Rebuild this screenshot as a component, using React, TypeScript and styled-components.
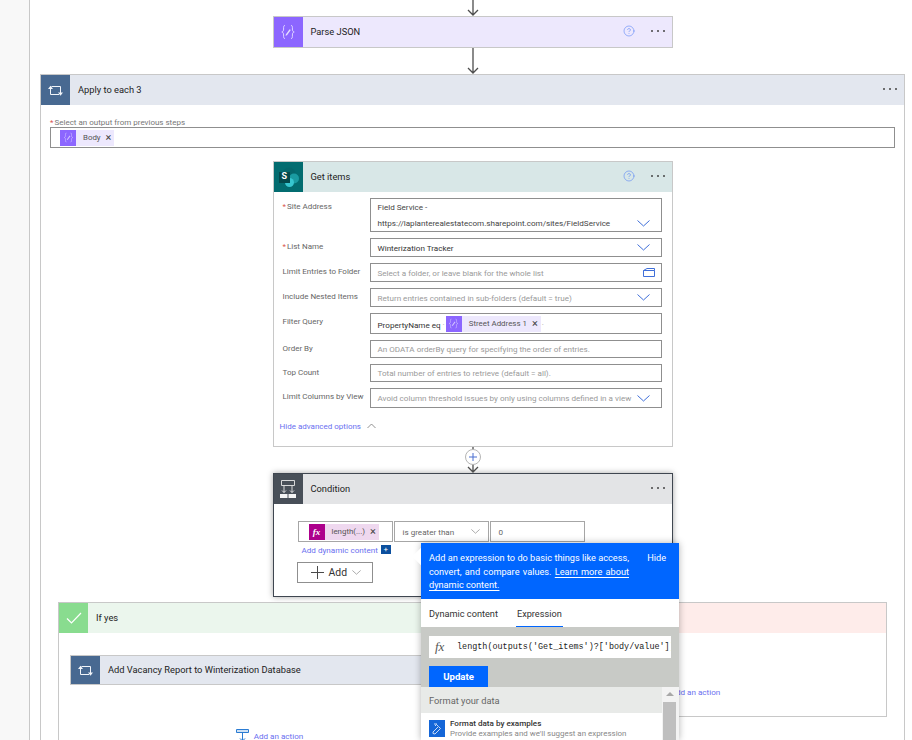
import React from 'react';
import styled, { createGlobalStyle } from 'styled-components';
import { CircleHelp } from 'lucide-react';

const GlobalStyle = createGlobalStyle`
  html, body {
    margin: 0;
    padding: 0;
    background: #fff;
  }
  * {
    box-sizing: border-box;
  }
`;

const Root = styled.div`
  position: relative;
  width: 912px;
  height: 740px;
  overflow: hidden;
  font-family: Roboto, 'Open Sans', sans-serif;
  font-size: 9.3px;
  color: #333;
`;

const Page = styled.div`
  display: flex;
  height: 740px;
`;

const Gutter = styled.div`
  flex: 0 0 30px;
  background: #f8f8f8;
  border-right: 1px solid #c8c8c8;
`;

const Canvas = styled.div`
  flex: 0 0 875px;
  padding-left: 10px;
`;

const ConnectorBox = styled.div<{ $h: number }>`
  position: relative;
  display: flex;
  justify-content: center;
  height: ${p => p.$h}px;
`;

const PlusCircle = styled.div`
  position: absolute;
  top: 2px;
  left: 50%;
  margin-left: -8px;
  width: 16px;
  height: 16px;
  display: flex;
  align-items: center;
  justify-content: center;
  background: #fff;
  border: 1px solid #b5b5b5;
  border-radius: 50%;
`;

const Card = styled.div<{ $dark?: boolean }>`
  width: 400px;
  margin: 0 auto;
  background: #fff;
  border: 1px solid ${p => (p.$dark ? '#3f4650' : '#c8c8c8')};
  box-shadow: ${p => (p.$dark ? '0 0 6px rgba(0,0,0,.35)' : 'none')};
`;

const Header = styled.div<{ $bg: string; $h?: number }>`
  display: flex;
  align-items: center;
  height: ${p => p.$h ?? 30}px;
  background: ${p => p.$bg};
`;

const IconCell = styled.div<{ $bg: string }>`
  position: relative;
  flex: 0 0 29px;
  align-self: stretch;
  display: flex;
  align-items: center;
  justify-content: center;
  background: ${p => p.$bg};
`;

const Title = styled.div`
  flex: 1;
  margin-top: -2px;
  padding-left: 8px;
  color: #222;
  white-space: nowrap;
`;

const Help = styled.div`
  display: flex;
  margin: -2px 16px 0 0;
  color: #4f7df5;
`;

const Dots = styled.div`
  display: flex;
  gap: 4px;
  margin: -2px 7px 0 0;

  span {
    width: 2px;
    height: 2px;
    border-radius: 50%;
    background: #444;
  }
`;

const MoreDots = () => (
  <Dots>
    <span />
    <span />
    <span />
  </Dots>
);

const ApplyCard = styled.div`
  width: 865px;
  background: #fff;
  border: 1px solid #c8c8c8;
  border-bottom: none;
`;

const ApplyBody = styled.div`
  padding: 11px 9px 0;
`;

const SmallLabel = styled.div`
  height: 11px;
  padding-top: 1px;
  line-height: 11px;
  font-size: 8px;
  color: #777;

  b {
    font-weight: 400;
    color: #d9534f;
    margin-right: 1px;
  }
`;

const OutputInput = styled.div`
  display: flex;
  align-items: center;
  height: 21px;
  padding-left: 9px;
  border: 1px solid #8f8f8f;
`;

const Token = styled.div<{ $bg: string; $indent?: number }>`
  display: flex;
  align-items: center;
  height: 16px;
  margin-left: ${p => p.$indent ?? 0}px;
  background: ${p => p.$bg};
  color: #555;
  font-size: 7.9px;
  white-space: nowrap;
`;

const TokenIcon = styled.div<{ $bg: string }>`
  flex: 0 0 16px;
  align-self: stretch;
  display: flex;
  align-items: center;
  justify-content: center;
  margin-right: 7px;
  background: ${p => p.$bg};
  color: #fff;
`;

const TokenClose = styled.span`
  margin: 0 3px 0 5px;
  font-size: 11px;
  line-height: 1;
  color: #444;
`;

const FxBadge = styled.span`
  font-family: 'Liberation Serif', serif;
  font-style: italic;
  font-weight: 700;
  font-size: 9px;
`;

const GetItemsWrap = styled.div`
  margin-top: 13px;
`;

const Form = styled.div`
  display: flex;
  flex-direction: column;
  gap: 6px;
  padding: 6px 10px 0 9px;
`;

const Row = styled.div`
  display: grid;
  grid-template-columns: 87px 1fr;
`;

const RowLabel = styled.div`
  padding-top: 3px;
  line-height: 11px;
  font-size: 8px;
  color: #666;
  white-space: nowrap;

  b {
    font-weight: 400;
    color: #d9534f;
    margin-right: 1px;
  }
`;

const Field = styled.div<{ $h: number }>`
  display: flex;
  align-items: center;
  height: ${p => p.$h}px;
  padding: 0 11px 0 7px;
  border: 1px solid #8f8f8f;
  font-size: 8.1px;
  color: #444;
  white-space: nowrap;
`;

const Placeholder = styled.span`
  flex: 1;
  color: #9a9a9a;
`;

const Value = styled.span`
  flex: 1;
  color: #333;
`;

const SiteValue = styled.div`
  flex: 1;
  display: flex;
  flex-direction: column;
  gap: 5px;
  line-height: 11px;
  color: #444;
`;

const SiteLine = styled.div`
  display: flex;
  align-items: center;
  justify-content: space-between;
`;

const FilterLead = styled.span`
  margin: 3px 1px 0 0;
  color: #333;
`;

const FilterDot = styled.span`
  margin: 0 1px;
  color: #aaa;
`;

const FolderSlot = styled.span`
  display: flex;
  margin-right: -5px;
`;

const HideLink = styled.div`
  display: flex;
  align-items: center;
  gap: 6px;
  height: 38px;
  padding: 0 0 2px 6px;
  font-size: 8px;
  color: #6a6ff0;
`;

const ConditionBody = styled.div`
  padding: 17px 0 13px 24px;
`;

const ConditionRow = styled.div`
  display: flex;
  gap: 1px;
`;

const ConditionCell = styled.div<{ $w: number }>`
  display: flex;
  align-items: center;
  justify-content: space-between;
  width: ${p => p.$w}px;
  height: 21px;
  padding: 0 8px;
  border: 1px solid #a6a6a6;
  font-size: 8.1px;
  color: #666;
`;

const DynamicRow = styled.div`
  display: flex;
  align-items: center;
  gap: 3px;
  height: 11px;
  margin-top: 2px;
  padding-left: 4px;
  font-size: 8.1px;
  color: #6a6ff0;
`;

const PlusBox = styled.span`
  display: flex;
  align-items: center;
  justify-content: center;
  width: 10px;
  height: 9px;
  background: #0b4f9e;
  color: #fff;
  font-size: 8px;
  line-height: 1;
`;

const AddButton = styled.div`
  display: flex;
  align-items: center;
  width: 76px;
  height: 21px;
  margin: 7px 0 0 -1px;
  padding-left: 13px;
  gap: 5px;
  border: 1px solid #8f8f8f;
  font-size: 10.4px;
  color: #333;
`;

const Branches = styled.div`
  display: flex;
  gap: 5px;
  margin-top: 5px;
  padding: 0 17px;
`;

const Branch = styled.div<{ $w: number; $open?: boolean }>`
  flex: 0 0 ${p => p.$w}px;
  align-self: flex-start;
  height: ${p => (p.$open ? 200 : 115)}px;
  border: 1px solid #c8c8c8;
`;

const BranchBody = styled.div`
  padding: 22px 11px 0;
`;

const InnerCard = styled.div`
  border: 1px solid #c8c8c8;
`;

const AddAction = styled.div<{ $top: number }>`
  display: flex;
  justify-content: center;
  align-items: flex-end;
  gap: 5px;
  margin-top: ${p => p.$top}px;
  height: 13px;
  font-size: 8.1px;
  line-height: 11px;
  color: #6a6ff0;
`;

const Popup = styled.div`
  position: absolute;
  left: 421px;
  top: 543px;
  width: 258px;
  height: 197px;
  background: #fff;
  box-shadow: 0 0 7px rgba(0, 0, 0, 0.3);
`;

const Caret = styled.div`
  position: absolute;
  left: -6px;
  top: 7px;
  width: 13px;
  height: 13px;
  background: #fff;
  transform: rotate(45deg);
`;

const Banner = styled.div`
  position: relative;
  display: flex;
  justify-content: space-between;
  height: 56px;
  padding: 8px 13px 0 8px;
  background: #0066ff;
  color: #fff;
  font-size: 9.2px;
  line-height: 13.5px;
`;

const BannerText = styled.div`
  width: 200px;
  text-align: justify;

  u {
    text-underline-offset: 2px;
  }
`;

const Tabs = styled.div`
  display: flex;
  gap: 17px;
  height: 28px;
  padding-left: 7px;
  font-size: 9.2px;
`;

const Tab = styled.div<{ $active?: boolean }>`
  display: flex;
  align-items: center;
  padding: 2px 1px 0;
  color: #333;
  border-bottom: 1px solid ${p => (p.$active ? '#0066ff' : 'transparent')};
`;

const ExpressionArea = styled.div`
  height: 60px;
  padding: 9px 8px 0;
  background: #c8cac6;
`;

const ExpressionInput = styled.div`
  display: flex;
  align-items: center;
  height: 22px;
  overflow: hidden;
  background: #fff;
  white-space: nowrap;
`;

const FxMark = styled.span`
  flex: 0 0 28px;
  padding-left: 6px;
  font-family: 'Liberation Serif', serif;
  font-style: italic;
  font-size: 13px;
  color: #555;
`;

const Code = styled.span`
  flex: 1;
  min-width: 0;
  overflow: hidden;
  font-family: 'Liberation Mono', monospace;
  font-size: 8.45px;
  color: #222;
`;

const UpdateButton = styled.div`
  display: flex;
  align-items: center;
  justify-content: center;
  width: 59px;
  height: 21px;
  margin-top: 8px;
  background: #0066ff;
  color: #fff;
  font-weight: 700;
  font-size: 9.6px;
`;

const ListArea = styled.div`
  display: grid;
  grid-template-columns: 241px 17px;
  height: 53px;
  overflow: hidden;
`;

const ListColumn = styled.div`
  min-width: 0;
`;

const ListHeader = styled.div`
  display: flex;
  align-items: center;
  height: 26px;
  padding-left: 8px;
  background: #e8eae8;
  color: #666;
`;

const ListItem = styled.div`
  display: flex;
  gap: 5px;
  padding: 5px 0 0 8px;
`;

const ItemIcon = styled.div`
  flex: 0 0 16px;
  display: flex;
  align-items: center;
  justify-content: center;
  height: 17px;
  margin-top: 2px;
  background: #1466d8;
`;

const ItemTitle = styled.div`
  line-height: 10px;
  font-size: 8.1px;
  font-weight: 500;
  color: #333;
  white-space: nowrap;
`;

const ItemSub = styled.div`
  line-height: 11px;
  font-size: 7.95px;
  color: #888;
  white-space: nowrap;
`;

const Scrollbar = styled.div`
  padding: 5px 3px 0 1px;
  background: #f3f3f3;
`;

const ScrollArrow = styled.div`
  width: 0;
  height: 0;
  margin: 0 auto;
  border-left: 4px solid transparent;
  border-right: 4px solid transparent;
  border-bottom: 4px solid #a8a8a8;
`;

const ScrollThumb = styled.div`
  height: 40px;
  margin-top: 6px;
  background: #bfbfbf;
`;

const SharePointBadge = styled.span`
  position: absolute;
  left: 8px;
  top: 9px;
  font-weight: 700;
  font-size: 9px;
  color: #fff;
`;

const Arrow = ({ h }: { h: number }) => (
  <svg width="16" height={h} viewBox={`0 0 16 ${h}`}>
    <path
      d={`M8 0V${h - 1}M3 ${h - 6}L8 ${h - 1}L13 ${h - 6}`}
      fill="none"
      stroke="#4d4d4d"
      strokeWidth="1.3"
    />
  </svg>
);

const Chevron = ({ color = '#3f6fd9', w = 13 }: { color?: string; w?: number }) => (
  <svg width={w} height="7" viewBox="0 0 13 7" style={{ flex: 'none' }}>
    <path d="M0.5 0.5L6.5 6L12.5 0.5" fill="none" stroke={color} strokeWidth="1" />
  </svg>
);

const BraceIcon = ({ size = 16, opacity = 1 }: { size?: number; opacity?: number }) => (
  <svg width={size} height={size} viewBox="0 0 16 16" opacity={opacity}>
    <path
      d="M5 1.5C3.3 1.5 3.6 3 3.6 5C3.6 6.8 3.2 7.6 1.8 8C3.2 8.4 3.6 9.2 3.6 11C3.6 13 3.3 14.5 5 14.5M11 1.5C12.7 1.5 12.4 3 12.4 5C12.4 6.8 12.8 7.6 14.2 8C12.8 8.4 12.4 9.2 12.4 11C12.4 13 12.7 14.5 11 14.5"
      fill="none"
      stroke="#e6deff"
      strokeWidth="0.9"
    />
    <path d="M5.8 10.4L9.6 5.2L10.8 6.1L7 11.3L5.6 11.7Z" fill="#e6deff" />
  </svg>
);

const LoopIcon = () => (
  <svg width="15" height="11" viewBox="0 0 15 11">
    <path d="M2.5 2V9.5H11M3.5 1.5H12.5V9.5" fill="none" stroke="#f2f5f9" strokeWidth="1" />
    <path d="M0 4L2.5 0.8L5 4ZM10 7.5L12.5 10.8L15 7.5Z" fill="#f2f5f9" />
  </svg>
);

const SharePointIcon = () => (
  <svg width="29" height="30" viewBox="0 0 29 30">
    <circle cx="15" cy="12" r="6.5" fill="#05666b" />
    <circle cx="20" cy="16.5" r="5" fill="#1a9ba1" />
    <circle cx="15.5" cy="20.5" r="4.5" fill="#37c6d0" />
    <rect x="5" y="10" width="11" height="11" fill="#04494d" />
  </svg>
);

const ConditionIcon = () => (
  <svg width="16" height="18" viewBox="0 0 16 18">
    <path
      d="M1.5 0.5H14.5V5.5H1.5ZM4 5.5V12.5M12 5.5V12.5M2 10.5L4 12.5L6 10.5M10 10.5L12 12.5L14 10.5"
      fill="none"
      stroke="#e8e8e8"
      strokeWidth="0.9"
    />
    <rect x="0" y="14" width="7.5" height="4" fill="#f4f4f4" />
    <rect x="8.5" y="14" width="7.5" height="4" fill="#f4f4f4" />
  </svg>
);

const CheckIcon = () => (
  <svg width="16" height="12" viewBox="0 0 16 12">
    <path d="M1 6.5L5.5 11L15 1" fill="none" stroke="#fff" strokeWidth="1.2" />
  </svg>
);

const FolderIcon = () => (
  <svg width="12" height="9" viewBox="0 0 12 9" style={{ flex: 'none' }}>
    <path d="M0.5 2.5H11.5V8.5H0.5ZM0.5 2.5L4 0.5H11.5V2.5" fill="none" stroke="#3f6fd9" strokeWidth="1" />
  </svg>
);

const ActionIcon = () => (
  <svg width="13" height="13" viewBox="0 0 13 13" style={{ flex: 'none' }}>
    <path d="M0.5 0.5H12.5V3.5H0.5ZM6.5 3.5V12M4 9.5L6.5 12L9 9.5" fill="#cfe2f5" stroke="#2b7cd3" strokeWidth="1" />
  </svg>
);

const PencilIcon = () => (
  <svg width="11" height="12" viewBox="0 0 11 12">
    <path d="M2 1H5M1 10.5L3 11L8.5 5.5L6.5 3.5L1 9ZM3 3L4.5 1.5L6 3" fill="none" stroke="#dce9fb" strokeWidth="0.9" />
  </svg>
);

const Plus = () => (
  <svg width="13" height="13" viewBox="0 0 13 13" style={{ flex: 'none' }}>
    <path d="M6.5 0V13M0 6.5H13" stroke="#4a4a4a" strokeWidth="1" />
  </svg>
);

export default function App() {
  return (
    <Root>
      <GlobalStyle />
      <Page>
        <Gutter />
        <Canvas>
          <ConnectorBox $h={16}>
            <Arrow h={16} />
          </ConnectorBox>

          <Card>
            <Header $bg="#ede8fd">
              <IconCell $bg="#8c66ff">
                <BraceIcon />
              </IconCell>
              <Title>Parse JSON</Title>
              <Help>
                <CircleHelp size={12} strokeWidth={1.1} />
              </Help>
              <MoreDots />
            </Header>
          </Card>

          <ConnectorBox $h={26}>
            <Arrow h={26} />
          </ConnectorBox>

          <ApplyCard>
            <Header $bg="#e3e7ef">
              <IconCell $bg="#486991">
                <LoopIcon />
              </IconCell>
              <Title>Apply to each 3</Title>
              <MoreDots />
            </Header>

            <ApplyBody>
              <SmallLabel>
                <b>*</b>Select an output from previous steps
              </SmallLabel>
              <OutputInput>
                <Token $bg="#ede8fd">
                  <TokenIcon $bg="#8c66ff">
                    <BraceIcon size={11} opacity={0.8} />
                  </TokenIcon>
                  Body
                  <TokenClose>×</TokenClose>
                </Token>
              </OutputInput>

              <GetItemsWrap>
                <Card>
                  <Header $bg="#d8e7e7">
                    <IconCell $bg="#036c70">
                      <SharePointIcon />
                      <SharePointBadge>S</SharePointBadge>
                    </IconCell>
                    <Title>Get items</Title>
                    <Help>
                      <CircleHelp size={12} strokeWidth={1.1} />
                    </Help>
                    <MoreDots />
                  </Header>

                  <Form>
                    <Row>
                      <RowLabel>
                        <b>*</b>Site Address
                      </RowLabel>
                      <Field $h={34}>
                        <SiteValue>
                          <div>Field Service -</div>
                          <SiteLine>
                            https://laplanterealestatecom.sharepoint.com/sites/FieldService
                            <Chevron />
                          </SiteLine>
                        </SiteValue>
                      </Field>
                    </Row>
                    <Row>
                      <RowLabel>
                        <b>*</b>List Name
                      </RowLabel>
                      <Field $h={19}>
                        <Value>Winterization Tracker</Value>
                        <Chevron />
                      </Field>
                    </Row>
                    <Row>
                      <RowLabel>Limit Entries to Folder</RowLabel>
                      <Field $h={19}>
                        <Placeholder>Select a folder, or leave blank for the whole list</Placeholder>
                        <FolderSlot>
                          <FolderIcon />
                        </FolderSlot>
                      </Field>
                    </Row>
                    <Row>
                      <RowLabel>Include Nested Items</RowLabel>
                      <Field $h={19}>
                        <Placeholder>Return entries contained in sub-folders (default = true)</Placeholder>
                        <Chevron />
                      </Field>
                    </Row>
                    <Row>
                      <RowLabel>Filter Query</RowLabel>
                      <Field $h={21}>
                        <FilterLead>PropertyName eq</FilterLead>
                        <FilterDot>·</FilterDot>
                        <Token $bg="#ede8fd">
                          <TokenIcon $bg="#8c66ff">
                            <BraceIcon size={11} opacity={0.8} />
                          </TokenIcon>
                          Street Address 1
                          <TokenClose>×</TokenClose>
                        </Token>
                        <FilterDot>·</FilterDot>
                      </Field>
                    </Row>
                    <Row>
                      <RowLabel>Order By</RowLabel>
                      <Field $h={18}>
                        <Placeholder>An ODATA orderBy query for specifying the order of entries.</Placeholder>
                      </Field>
                    </Row>
                    <Row>
                      <RowLabel>Top Count</RowLabel>
                      <Field $h={18}>
                        <Placeholder>Total number of entries to retrieve (default = all).</Placeholder>
                      </Field>
                    </Row>
                    <Row>
                      <RowLabel>Limit Columns by View</RowLabel>
                      <Field $h={20}>
                        <Placeholder>Avoid column threshold issues by only using columns defined in a view</Placeholder>
                        <Chevron />
                      </Field>
                    </Row>
                  </Form>

                  <HideLink>
                    Hide advanced options
                    <svg width="9" height="6" viewBox="0 0 9 6">
                      <path d="M0.5 5L4.5 1L8.5 5" fill="none" stroke="#777" strokeWidth="0.8" />
                    </svg>
                  </HideLink>
                </Card>
              </GetItemsWrap>

              <ConnectorBox $h={26}>
                <Arrow h={26} />
                <PlusCircle>
                  <svg width="8" height="8" viewBox="0 0 8 8">
                    <path d="M4 0V8M0 4H8" stroke="#4a6fd0" strokeWidth="1" />
                  </svg>
                </PlusCircle>
              </ConnectorBox>

              <Card $dark>
                <Header $bg="#e3e4e6">
                  <IconCell $bg="#484f58">
                    <ConditionIcon />
                  </IconCell>
                  <Title>Condition</Title>
                  <MoreDots />
                </Header>
                <ConditionBody>
                  <ConditionRow>
                    <ConditionCell $w={95}>
                      <Token $bg="#efd8ef" $indent={2}>
                        <TokenIcon $bg="#ad008c">
                          <FxBadge>fx</FxBadge>
                        </TokenIcon>
                        length(...)
                        <TokenClose>×</TokenClose>
                      </Token>
                    </ConditionCell>
                    <ConditionCell $w={95}>
                      is greater than
                      <Chevron color="#888" w={9} />
                    </ConditionCell>
                    <ConditionCell $w={95}>0</ConditionCell>
                  </ConditionRow>
                  <DynamicRow>
                    Add dynamic content
                    <PlusBox>+</PlusBox>
                  </DynamicRow>
                  <AddButton>
                    <Plus />
                    Add
                    <Chevron color="#888" w={9} />
                  </AddButton>
                </ConditionBody>
              </Card>
            </ApplyBody>

            <Branches>
              <Branch $w={423} $open>
                <Header $bg="#ebf6ed">
                  <IconCell $bg="#89dc8f">
                    <CheckIcon />
                  </IconCell>
                  <Title>If yes</Title>
                </Header>
                <BranchBody>
                  <InnerCard>
                    <Header $bg="#e3e7ef" $h={28}>
                      <IconCell $bg="#486991">
                        <LoopIcon />
                      </IconCell>
                      <Title>Add Vacancy Report to Winterization Database</Title>
                    </Header>
                  </InnerCard>
                  <AddAction $top={44}>
                    <ActionIcon />
                    Add an action
                  </AddAction>
                </BranchBody>
              </Branch>
              <Branch $w={401}>
                <Header $bg="#feecea">
                  <IconCell $bg="#f5a3a0" />
                  <Title>If no</Title>
                </Header>
                <AddAction $top={52}>
                  <ActionIcon />
                  Add an action
                </AddAction>
              </Branch>
            </Branches>
          </ApplyCard>
        </Canvas>
      </Page>

      <Popup>
        <Caret />
        <Banner>
          <BannerText>
            Add an expression to do basic things like access, convert, and compare values.{' '}
            <u>Learn more about dynamic content.</u>
          </BannerText>
          <span>Hide</span>
        </Banner>
        <Tabs>
          <Tab>Dynamic content</Tab>
          <Tab $active>Expression</Tab>
        </Tabs>
        <ExpressionArea>
          <ExpressionInput>
            <FxMark>fx</FxMark>
            <Code>length(outputs('Get_items')?['body/value'])</Code>
          </ExpressionInput>
          <UpdateButton>Update</UpdateButton>
        </ExpressionArea>
        <ListArea>
          <ListColumn>
            <ListHeader>Format your data</ListHeader>
            <ListItem>
              <ItemIcon>
                <PencilIcon />
              </ItemIcon>
              <div>
                <ItemTitle>Format data by examples</ItemTitle>
                <ItemSub>Provide examples and we'll suggest an expression</ItemSub>
              </div>
            </ListItem>
          </ListColumn>
          <Scrollbar>
            <ScrollArrow />
            <ScrollThumb />
          </Scrollbar>
        </ListArea>
      </Popup>
    </Root>
  );
}
